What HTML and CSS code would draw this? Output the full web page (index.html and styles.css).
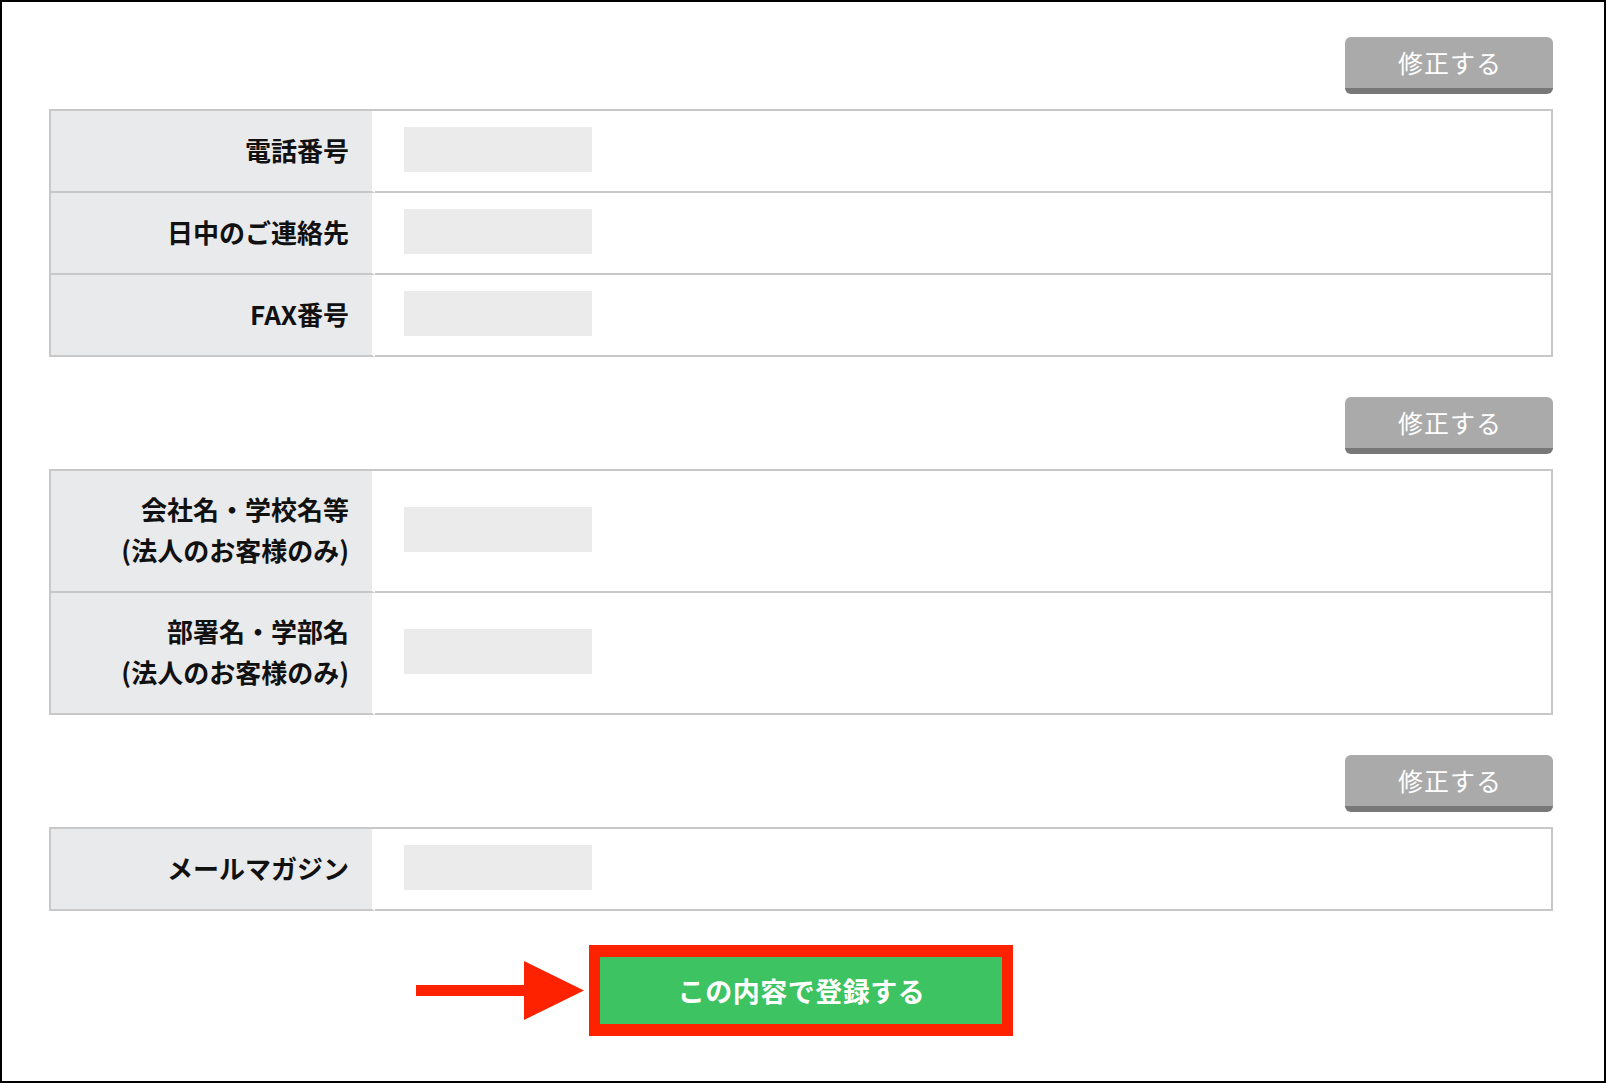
FILE: index.html
```html
<!DOCTYPE html>
<html lang="ja">
  <head>
    <meta charset="UTF-8" />
    <meta name="viewport" content="width=device-width, initial-scale=1.0" />
    <title>登録内容の確認</title>
    <link rel="stylesheet" href="styles.css">
  </head>
  <body>
    <div class="frame">
      <div class="section">
        <div class="edit-bar">
          <button class="edit-button">修正する</button>
        </div>
        <table class="info">
          <tr>
            <th>電話番号</th>
            <td><div class="blank"></div></td>
          </tr>
          <tr>
            <th>日中のご連絡先</th>
            <td><div class="blank"></div></td>
          </tr>
          <tr>
            <th>FAX番号</th>
            <td><div class="blank"></div></td>
          </tr>
        </table>
      </div>

      <div class="section">
        <div class="edit-bar">
          <button class="edit-button">修正する</button>
        </div>
        <table class="info">
          <tr>
            <th>会社名・学校名等<br />(法人のお客様のみ)</th>
            <td><div class="blank"></div></td>
          </tr>
          <tr>
            <th>部署名・学部名<br />(法人のお客様のみ)</th>
            <td><div class="blank"></div></td>
          </tr>
        </table>
      </div>

      <div class="section">
        <div class="edit-bar">
          <button class="edit-button">修正する</button>
        </div>
        <table class="info">
          <tr>
            <th>メールマガジン</th>
            <td><div class="blank"></div></td>
          </tr>
        </table>
      </div>

      <!-- 登録ボタン -->
      <div class="submit-row">
        <svg class="arrow" width="168" height="60" viewBox="0 0 168 60">
          <rect x="0" y="24" width="110" height="11" fill="#ff2200" />
          <polygon points="108,0 168,29.5 108,59" fill="#ff2200" />
        </svg>
        <div class="highlight">
          <button class="submit-button">この内容で登録する</button>
        </div>
      </div>
    </div>
  </body>
</html>
```

FILE: styles.css
```css
body {
  margin: 0;
  padding: 0;
  background-color: #fff;
  font-family: "Noto Sans CJK JP", "Noto Sans", sans-serif;
  color: #111;
}
.frame {
  box-sizing: border-box;
  width: 1606px;
  height: 1083px;
  border: 2px solid #000;
  padding: 35px 51px 0 47px;
}
.section {
  margin-bottom: 40px;
}
.edit-bar {
  display: flex;
  justify-content: flex-end;
  margin-bottom: 15px;
}
.edit-button {
  width: 208px;
  height: 57px;
  padding: 0 0 0 2px;
  background-color: #aaaaaa;
  border: none;
  border-bottom: 6px solid #787878;
  border-radius: 6px;
  color: #fff;
  font-family: "Noto Sans CJK JP", sans-serif;
  font-size: 25px;
  letter-spacing: 1px;
  line-height: 51px;
  cursor: pointer;
}
.info {
  width: 100%;
  border-collapse: separate;
  border-spacing: 0;
  border: 2px solid #c8c8c8;
  border-bottom: none;
}
.info th,
.info td {
  border-bottom: 2px solid #c8c8c8;
}
.info th {
  box-sizing: border-box;
  width: 324px;
  padding: 17px 23px 21px 10px;
  background-color: #e9eaec;
  border-right: 3px solid #fff;
  text-align: right;
  font-size: 26px;
  font-weight: bold;
  line-height: 41px;
  color: #111;
}
.info td {
  padding: 16px 29px 19px;
  vertical-align: middle;
}
.blank {
  width: 188px;
  height: 45px;
  background-color: #ebebeb;
}
.submit-row {
  display: flex;
  align-items: center;
  gap: 5px;
  margin-top: -6px;
  padding-left: 367px;
}
.arrow {
  display: block;
}
.highlight {
  border: solid #ff2200;
  border-width: 12px 11px;
}
.submit-button {
  display: block;
  width: 402px;
  height: 67px;
  padding: 0 0 0 1px;
  background-color: #3dc361;
  border: none;
  color: #fff;
  font-family: "Noto Sans CJK JP", sans-serif;
  font-size: 27px;
  font-weight: bold;
  letter-spacing: 0.5px;
  cursor: pointer;
}
```
